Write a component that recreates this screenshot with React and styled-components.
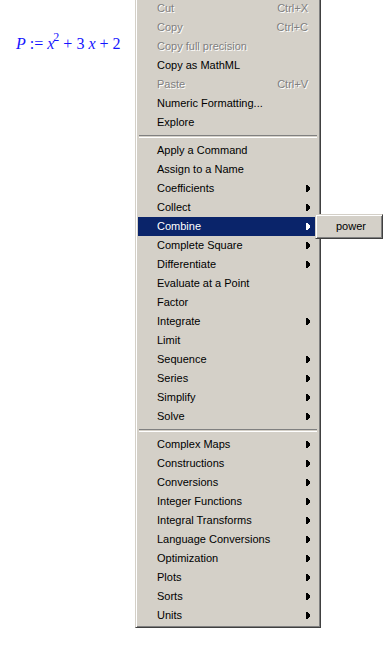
import React from "react";
import styled, { createGlobalStyle } from "styled-components";

const Global = createGlobalStyle`
  html, body { margin: 0; padding: 0; background: #ffffff; }
  body { width: 386px; height: 671px; overflow: hidden; position: relative; }
  #root { width: 386px; height: 671px; position: relative; overflow: hidden; }
`;

const Worksheet = styled.div`
  position: relative;
  width: 386px;
  height: 671px;
  padding: 34px 0 0 16px;
  box-sizing: border-box;
  background: #fff;
`;

const Expr = styled.div`
  font-family: "Liberation Serif", "Times New Roman", serif;
  font-size: 16px;
  line-height: 20px;
  color: #1414ff;
  white-space: pre;
`;

const Var = styled.i`
  font-style: italic;
`;

const Sup = styled.sup`
  font-size: 12px;
  vertical-align: 8px;
  line-height: 0;
  margin-left: -1px;
`;

const Menu = styled.div`
  position: absolute;
  top: ${(p) => p.$top}px;
  left: ${(p) => p.$left}px;
  width: ${(p) => p.$width}px;
  box-sizing: border-box;
  background: #d4d0c8;
  border-top: 1px solid #d4d0c8;
  border-left: 1px solid #d4d0c8;
  border-right: 1px solid #404040;
  border-bottom: 1px solid #404040;
  box-shadow: inset 1px 1px 0 #ffffff, inset -1px -1px 0 #808080;
  padding: 2px;
  font-family: "Liberation Sans", Arial, sans-serif;
  font-size: 11px;
  color: #000;
  display: flex;
  flex-direction: column;
`;

const Item = styled.div`
  height: 19px;
  box-sizing: border-box;
  display: flex;
  align-items: center;
  padding: 0 4px 1px ${(p) => p.$pl ?? 19}px;
  background: ${(p) => (p.$active ? "#0a246a" : "transparent")};
  color: ${(p) => (p.$active ? "#ffffff" : p.$disabled ? "#808080" : "#000000")};
  text-shadow: ${(p) => (p.$disabled ? "1px 1px 0 #ffffff" : "none")};
  white-space: nowrap;
`;

const Label = styled.span`
  flex: 1;
`;

const Shortcut = styled.span`
  margin-right: 6px;
`;

const Arrow = styled.svg`
  width: 4px;
  height: 7px;
  margin: 1px 4px 0 0;
  flex: none;
  shape-rendering: crispEdges;
`;

const Separator = styled.div`
  height: 9px;
  display: flex;
  align-items: flex-start;
  padding: 3px 1px 0;
  box-sizing: border-box;
  &::before {
    content: "";
    flex: 1;
    height: 1px;
    border-top: 1px solid #808080;
    border-bottom: 1px solid #ffffff;
  }
`;

const SubLabel = styled.span`
  flex: 1;
`;

const ArrowIcon = ({ color }) => (
  <Arrow viewBox="0 0 4 7">
    <polygon points="0,0 1,0 4,3 4,4 1,7 0,7" fill={color} />
  </Arrow>
);

const groups = [
  [
    { label: "Cut", shortcut: "Ctrl+X", disabled: true },
    { label: "Copy", shortcut: "Ctrl+C", disabled: true },
    { label: "Copy full precision", disabled: true },
    { label: "Copy as MathML" },
    { label: "Paste", shortcut: "Ctrl+V", disabled: true },
    { label: "Numeric Formatting..." },
    { label: "Explore" },
  ],
  [
    { label: "Apply a Command" },
    { label: "Assign to a Name" },
    { label: "Coefficients", sub: true },
    { label: "Collect", sub: true },
    { label: "Combine", sub: true, active: true },
    { label: "Complete Square", sub: true },
    { label: "Differentiate", sub: true },
    { label: "Evaluate at a Point" },
    { label: "Factor" },
    { label: "Integrate", sub: true },
    { label: "Limit" },
    { label: "Sequence", sub: true },
    { label: "Series", sub: true },
    { label: "Simplify", sub: true },
    { label: "Solve", sub: true },
  ],
  [
    { label: "Complex Maps", sub: true },
    { label: "Constructions", sub: true },
    { label: "Conversions", sub: true },
    { label: "Integer Functions", sub: true },
    { label: "Integral Transforms", sub: true },
    { label: "Language Conversions", sub: true },
    { label: "Optimization", sub: true },
    { label: "Plots", sub: true },
    { label: "Sorts", sub: true },
    { label: "Units", sub: true },
  ],
];

export default function App() {
  return (
    <>
      <Global />
      <Worksheet>
        <Expr>
          <Var>P</Var>
          {" := "}
          <Var>x</Var>
          <Sup>2</Sup>
          {" + 3 "}
          <Var>x</Var>
          {" + 2"}
        </Expr>

        <Menu $top={-4} $left={135} $width={186}>
          {groups.map((g, gi) => (
            <React.Fragment key={gi}>
              {gi > 0 && <Separator />}
              {g.map((it) => (
                <Item key={it.label} $active={it.active} $disabled={it.disabled}>
                  <Label>{it.label}</Label>
                  {it.shortcut && <Shortcut>{it.shortcut}</Shortcut>}
                  {it.sub && <ArrowIcon color={it.active ? "#ffffff" : "#000000"} />}
                </Item>
              ))}
            </React.Fragment>
          ))}
        </Menu>

        <Menu $top={214} $left={315} $width={68}>
          <Item $pl={18}>
            <SubLabel>power</SubLabel>
          </Item>
        </Menu>
      </Worksheet>
    </>
  );
}
